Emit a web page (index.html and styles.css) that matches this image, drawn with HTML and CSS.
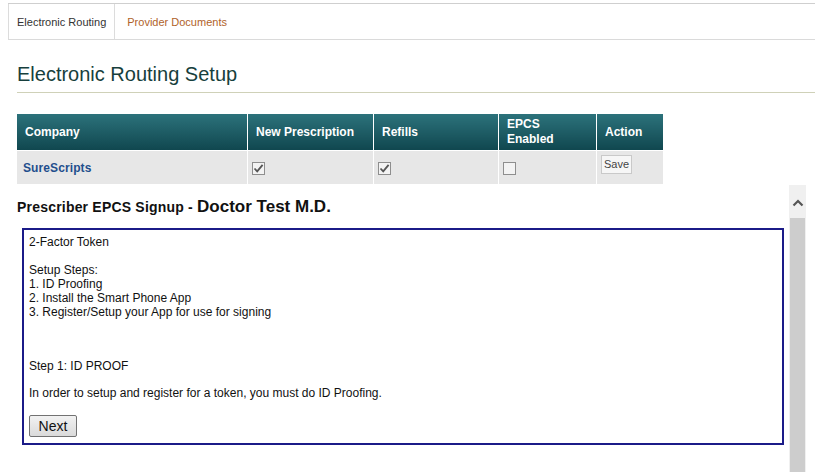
FILE: index.html
```html
<!DOCTYPE html>
<html>
<head>
<meta charset="utf-8">
<link rel="stylesheet" href="styles.css">
</head>
<body>
<div class="tabs">
  <div class="tab active">Electronic Routing</div>
  <div class="tab link">Provider Documents</div>
</div>
<div class="main">
  <h1 class="title">Electronic Routing Setup</h1>
  <table class="grid">
    <thead>
      <tr>
        <th class="c1">Company</th>
        <th class="c2">New Prescription</th>
        <th class="c3">Refills</th>
        <th class="c4">EPCS<br>Enabled</th>
        <th class="c5">Action</th>
      </tr>
    </thead>
    <tbody>
      <tr>
        <td class="company">SureScripts</td>
        <td><span class="cb"><svg width="11" height="11" viewBox="0 0 11 11"><path d="M1.5 5.5 L4.2 8.3 L9.6 1.8" fill="none" stroke="#555" stroke-width="1.8"/></svg></span></td>
        <td><span class="cb"><svg width="11" height="11" viewBox="0 0 11 11"><path d="M1.5 5.5 L4.2 8.3 L9.6 1.8" fill="none" stroke="#555" stroke-width="1.8"/></svg></span></td>
        <td><span class="cb"></span></td>
        <td class="act"><span class="save">Save</span></td>
      </tr>
    </tbody>
  </table>
  <div class="scroller">
    <div class="scroll-content">
      <div class="signup"><span class="lbl">Prescriber EPCS Signup - </span><span class="doc">Doctor Test M.D.</span></div>
      <div class="panel">
        <div class="lines">2-Factor Token<br><br>Setup Steps:<br>1. ID Proofing<br>2. Install the Smart Phone App<br>3. Register/Setup your App for use for signing</div>
        <p class="step">Step 1: ID PROOF</p>
        <p class="info">In order to setup and register for a token, you must do ID Proofing.</p>
        <button class="next">Next</button>
      </div>
    </div>
    <div class="sbar">
      <div class="sbar-top"><svg width="12" height="8" viewBox="0 0 12 8"><path d="M1.5 6.5 L6 2 L10.5 6.5" fill="none" stroke="#555" stroke-width="2.2"/></svg></div>
      <div class="thumb"></div>
    </div>
  </div>
</div>
</body>
</html>
```
FILE: styles.css
```css
html, body {
  margin: 0;
  padding: 0;
  background: #fff;
  font-family: "Liberation Sans", Arial, sans-serif;
  overflow: hidden;
  height: 472px;
}
.tabs {
  display: flex;
  margin: 3px 0 0 8px;
  height: 35px;
  border-top: 1px solid #cfcfcf;
  border-bottom: 1px solid #dadada;
}
.tab {
  display: flex;
  align-items: center;
  padding: 0 9px 0 9px;
  font-size: 11px;
  color: #333;
}
.tab.active {
  border-left: 1px solid #dcdcdc;
  border-right: 1px solid #dcdcdc;
  padding: 0 8px 0 8px;
}
.tab.link {
  color: #b0622a;
  padding-left: 12px;
}
.main {
  padding-left: 17px;
}
.title {
  margin: 22px 0 0 0;
  padding: 0 0 6px 0;
  font-size: 20px;
  font-weight: normal;
  color: #173f3d;
  line-height: 24px;
  border-bottom: 1px solid #cfd1b8;
}
.grid {
  margin-top: 21px;
  border-collapse: collapse;
  font-size: 12px;
}
.grid th {
  height: 36px;
  padding: 0 0 0 8px;
  text-align: left;
  vertical-align: middle;
  color: #fff;
  font-weight: bold;
  background: linear-gradient(#2c727b, #10474f);
  border-right: 1px solid #fff;
  line-height: 15px;
}
.grid th.c5 { border-right: none; }
.c1 { width: 222px; }
.c2 { width: 117px; }
.c3 { width: 116px; }
.c4 { width: 89px; }
.c5 { width: 58px; }
.grid td {
  height: 33px;
  padding: 0 0 0 4px;
  background: #e7e7e7;
  border-right: 1px solid #fff;
  border-top: 1px solid #fff;
  vertical-align: middle;
}
.grid td.act { border-right: none; vertical-align: top; padding-top: 4px; height: 29px; }
.grid td.company {
  padding-left: 6px;
  font-weight: bold;
  color: #1f4f8d;
  font-size: 12px;
  letter-spacing: 0.1px;
}
.cb {
  display: flex;
  align-items: center;
  justify-content: center;
  width: 11px;
  height: 11px;
  border: 1px solid #8e8e8e;
  background: #f3f3f3;
  margin-top: 2px;
}
.save {
  display: inline-block;
  border: 1px solid #c9c9c9;
  background: #f6f6f6;
  color: #444;
  font-size: 11px;
  padding: 2px 2px 3px 2px;
  line-height: 12px;
}
.scroller {
  display: flex;
  margin-top: 1px;
  height: 288px;
}
.scroll-content {
  width: 772px;
}
.signup {
  padding-top: 12px;
  font-weight: bold;
  color: #111;
  line-height: 20px;
}
.lbl { font-size: 14px; letter-spacing: 0.2px; }
.doc { font-size: 17px; }
.panel {
  margin: 11px 5px 0 5px;
  border: 2px solid #1b1b88;
  padding: 5px 5px 6px 5px;
  font-size: 12px;
  color: #111;
  line-height: 14px;
}
.panel p { margin: 0; }
.step { margin-top: 40px !important; }
.info { margin-top: 13px !important; }
.next {
  display: block;
  margin-top: 15px;
  width: 48px;
  height: 22px;
  padding: 0;
  font-family: "Liberation Sans", Arial, sans-serif;
  font-size: 14px;
  color: #111;
  border: 1px solid #727272;
  border-radius: 2px;
  background: linear-gradient(#f2f2f2, #dadada);
}
.sbar {
  width: 17px;
  background: #f0f0f0;
  display: flex;
  flex-direction: column;
  align-items: center;
}
.sbar-top {
  height: 33px;
  display: flex;
  align-items: center;
  justify-content: center;
  padding-top: 2px;
  box-sizing: border-box;
}
.thumb {
  flex: 1;
  width: 15px;
  background: #cdcdcd;
}
```
